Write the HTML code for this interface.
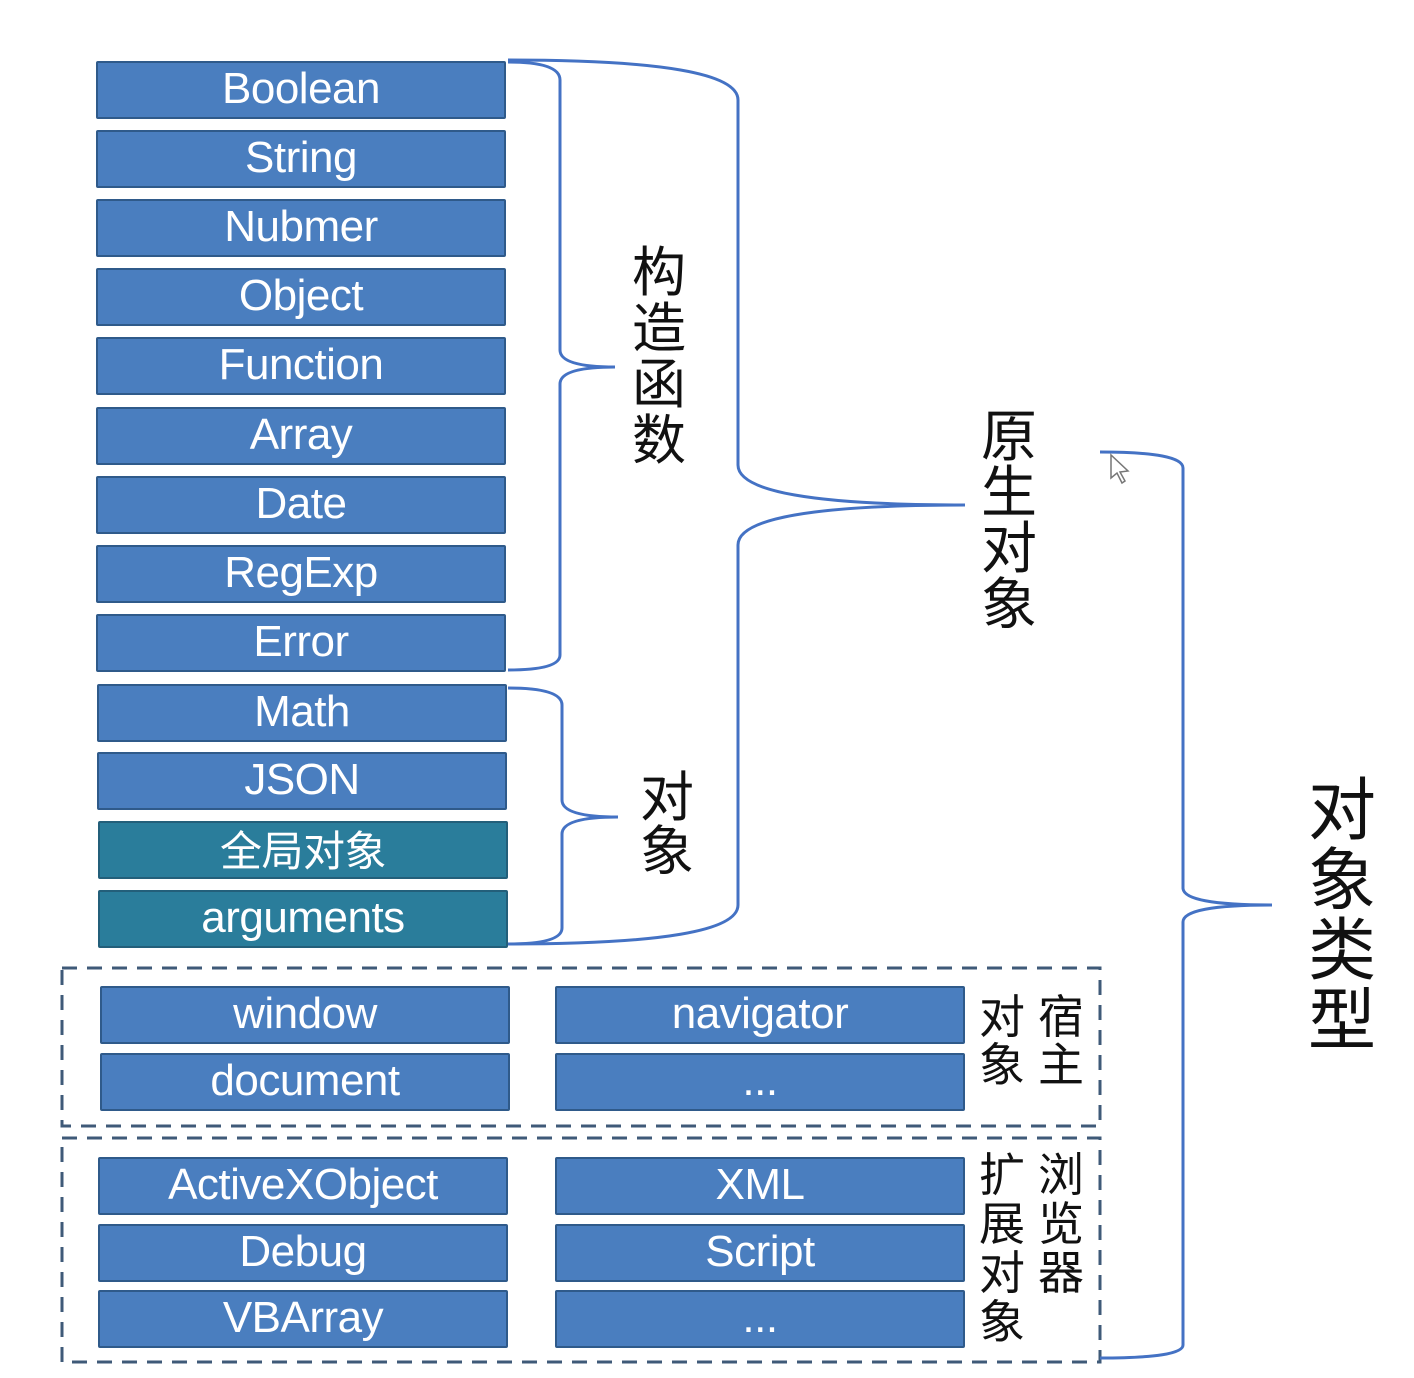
<!DOCTYPE html>
<html><head><meta charset="utf-8"><style>
body{margin:0;width:1414px;height:1378px;background:#fff;position:relative;overflow:hidden;font-family:"Liberation Sans","Noto Sans CJK SC",sans-serif}
.b{position:absolute;height:58px;background:#4a7ebf;border:2px solid #2f5a8a;box-sizing:border-box;color:#fff;text-align:center;font-size:44px;line-height:52px;letter-spacing:-0.5px;border-radius:2px}
.t{background:#2a7d9b;border-color:#235f7a}
.c{position:absolute;font-family:"Noto Sans CJK SC",sans-serif;color:#111;text-align:center}
svg{position:absolute;left:0;top:0}
</style></head><body>
<svg width="1414" height="1378" fill="none" stroke="#3f5a78" stroke-width="3" stroke-dasharray="15 10">
<rect x="62" y="968" width="1038" height="158"/>
<rect x="62" y="1138" width="1038" height="224"/>
</svg>
<div class="b" style="left:96px;top:61px;width:410px">Boolean</div>
<div class="b" style="left:96px;top:130px;width:410px">String</div>
<div class="b" style="left:96px;top:199px;width:410px">Nubmer</div>
<div class="b" style="left:96px;top:268px;width:410px">Object</div>
<div class="b" style="left:96px;top:337px;width:410px">Function</div>
<div class="b" style="left:96px;top:407px;width:410px">Array</div>
<div class="b" style="left:96px;top:476px;width:410px">Date</div>
<div class="b" style="left:96px;top:545px;width:410px">RegExp</div>
<div class="b" style="left:96px;top:614px;width:410px">Error</div>
<div class="b" style="left:97px;top:684px;width:410px">Math</div>
<div class="b" style="left:97px;top:752px;width:410px">JSON</div>
<div class="b t" style="left:98px;top:821px;width:410px;font-family:'Noto Sans CJK SC',sans-serif;font-size:42px">全局对象</div>
<div class="b t" style="left:98px;top:890px;width:410px">arguments</div>

<div class="b" style="left:100px;top:986px;width:410px">window</div>
<div class="b" style="left:100px;top:1053px;width:410px">document</div>
<div class="b" style="left:555px;top:986px;width:410px">navigator</div>
<div class="b" style="left:555px;top:1053px;width:410px">...</div>
<div class="b" style="left:98px;top:1157px;width:410px">ActiveXObject</div>
<div class="b" style="left:98px;top:1224px;width:410px">Debug</div>
<div class="b" style="left:98px;top:1290px;width:410px">VBArray</div>
<div class="b" style="left:555px;top:1157px;width:410px">XML</div>
<div class="b" style="left:555px;top:1224px;width:410px">Script</div>
<div class="b" style="left:555px;top:1290px;width:410px">...</div>

<svg width="1414" height="1378" fill="none" stroke="#4472c4" stroke-width="3">
<path d="M508 62 Q560 62 560 80 L560 350 Q560 367 615 367 Q560 367 560 384 L560 655 Q560 670 508 670"/>
<path d="M508 688 Q562 688 562 705 L562 800 Q562 817 618 817 Q562 817 562 834 L562 928 Q562 944 508 944"/>
<path d="M508 60 Q738 60 738 100 L738 465 Q738 505 965 505 Q738 505 738 545 L738 905 Q738 944 508 944"/>
<path d="M1100 452 Q1183 452 1183 468 L1183 888 Q1183 905 1272 905 Q1183 905 1183 922 L1183 1345 Q1183 1358 1100 1358"/>
</svg>
<svg width="1414" height="1378"><path d="M1111 455 L1111 478 L1117 473 L1122 483 L1125 481 L1120 472 L1128 471 Z" fill="#fff" stroke="#777" stroke-width="1.5"/></svg>

<div class="c" style="left:628px;top:240px;width:62px;font-size:54px;line-height:56px">构<br>造<br>函<br>数</div>
<div class="c" style="left:636px;top:766px;width:62px;font-size:54px;line-height:54px">对<br>象</div>
<div class="c" style="left:978px;top:405px;width:62px;font-size:56px;line-height:56px">原<br>生<br>对<br>象</div>
<div class="c" style="left:1305px;top:770px;width:74px;font-size:68px;line-height:70px">对<br>象<br>类<br>型</div>
<div class="c" style="left:976px;top:990px;width:52px;font-size:46px;line-height:48px">对<br>象</div>
<div class="c" style="left:1035px;top:990px;width:52px;font-size:46px;line-height:48px">宿<br>主</div>
<div class="c" style="left:976px;top:1148px;width:52px;font-size:46px;line-height:49px">扩<br>展<br>对<br>象</div>
<div class="c" style="left:1035px;top:1148px;width:52px;font-size:46px;line-height:49px">浏<br>览<br>器</div>
</body></html>
